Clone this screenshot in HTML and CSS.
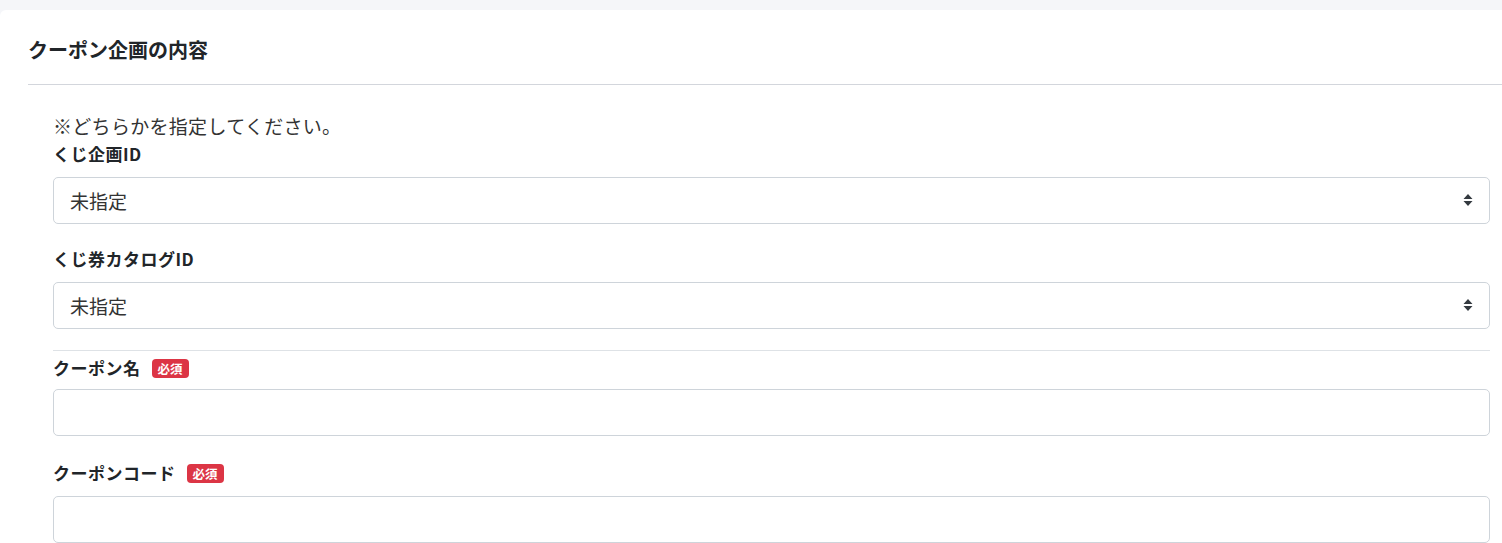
FILE: index.html
```html
<!DOCTYPE html>
<html lang="ja">
<head>
<meta charset="utf-8">
<title>クーポン企画の内容</title>
<link rel="stylesheet" href="styles.css">
</head>
<body>
<div class="card">
  <h2 class="card-title">クーポン企画の内容</h2>
  <div class="card-body">
    <p class="note">※どちらかを指定してください。</p>
    <div class="field">
      <label class="label">くじ企画ID</label>
      <div class="select-wrap">
        <select class="control"><option>未指定</option></select>
        <svg class="caret" width="10" height="12" viewBox="0 0 10 12"><path d="M5 0 L9.5 5 H0.5 Z M0.5 7 H9.5 L5 12 Z" fill="#343a40"/></svg>
      </div>
    </div>
    <div class="field">
      <label class="label">くじ券カタログID</label>
      <div class="select-wrap">
        <select class="control"><option>未指定</option></select>
        <svg class="caret" width="10" height="12" viewBox="0 0 10 12"><path d="M5 0 L9.5 5 H0.5 Z M0.5 7 H9.5 L5 12 Z" fill="#343a40"/></svg>
      </div>
    </div>
    <hr class="sep">
    <div class="field field-tight">
      <label class="label">クーポン名<span class="badge">必須</span></label>
      <input class="control" type="text">
    </div>
    <div class="field">
      <label class="label">クーポンコード<span class="badge">必須</span></label>
      <input class="control" type="text">
    </div>
  </div>
</div>
</body>
</html>
```
FILE: styles.css
```css
html, body {
  margin: 0;
  padding: 0;
  overflow: hidden;
}
body {
  background: #f5f6f9;
  font-family: "Noto Sans CJK JP", "Noto Sans", sans-serif;
  color: #212529;
}
.card {
  margin-top: 10px;
  background: #fff;
  border-top-left-radius: 6px;
  padding: 25px 0 0 28px;
  height: 600px;
}
.card-title {
  margin: 0;
  font-size: 20px;
  font-weight: 700;
  line-height: 30px;
  padding-bottom: 19px;
  border-bottom: 1px solid #d3d6dc;
}
.card-body {
  padding: 27px 12px 0 25px;
}
.note {
  margin: 0;
  font-size: 19px;
  line-height: 28px;
  letter-spacing: 0.3px;
  color: #333;
  height: 29px;
}
.field {
  margin-bottom: 22px;
}
.label {
  display: flex;
  align-items: center;
  height: 24px;
  margin-bottom: 12px;
  font-size: 17px;
  font-weight: 700;
  letter-spacing: 0.5px;
  color: #212529;
}
.badge {
  display: inline-block;
  margin-left: 11px;
  padding: 0 6px;
  height: 19px;
  line-height: 19px;
  font-size: 12.5px;
  font-weight: 700;
  letter-spacing: 0;
  color: #fff;
  background: #dc3545;
  border-radius: 4px;
  position: relative;
  top: 1px;
}
.select-wrap {
  position: relative;
}
.control {
  display: block;
  width: 100%;
  box-sizing: border-box;
  height: 47px;
  padding: 0 16px;
  font-family: "Noto Sans CJK JP", "Noto Sans", sans-serif;
  font-size: 19px;
  color: #333;
  background: #fff;
  border: 1px solid #ced4da;
  border-radius: 5px;
  appearance: none;
  -webkit-appearance: none;
  outline: none;
}
.caret {
  position: absolute;
  right: 17px;
  top: 17px;
  pointer-events: none;
}
.sep {
  border: 0;
  border-top: 1px solid #dee2e6;
  margin: -1px 0 4px 0;
}
.field-tight {
  margin-bottom: 24px;
}
.field-tight .label {
  margin-bottom: 10px;
}
```
